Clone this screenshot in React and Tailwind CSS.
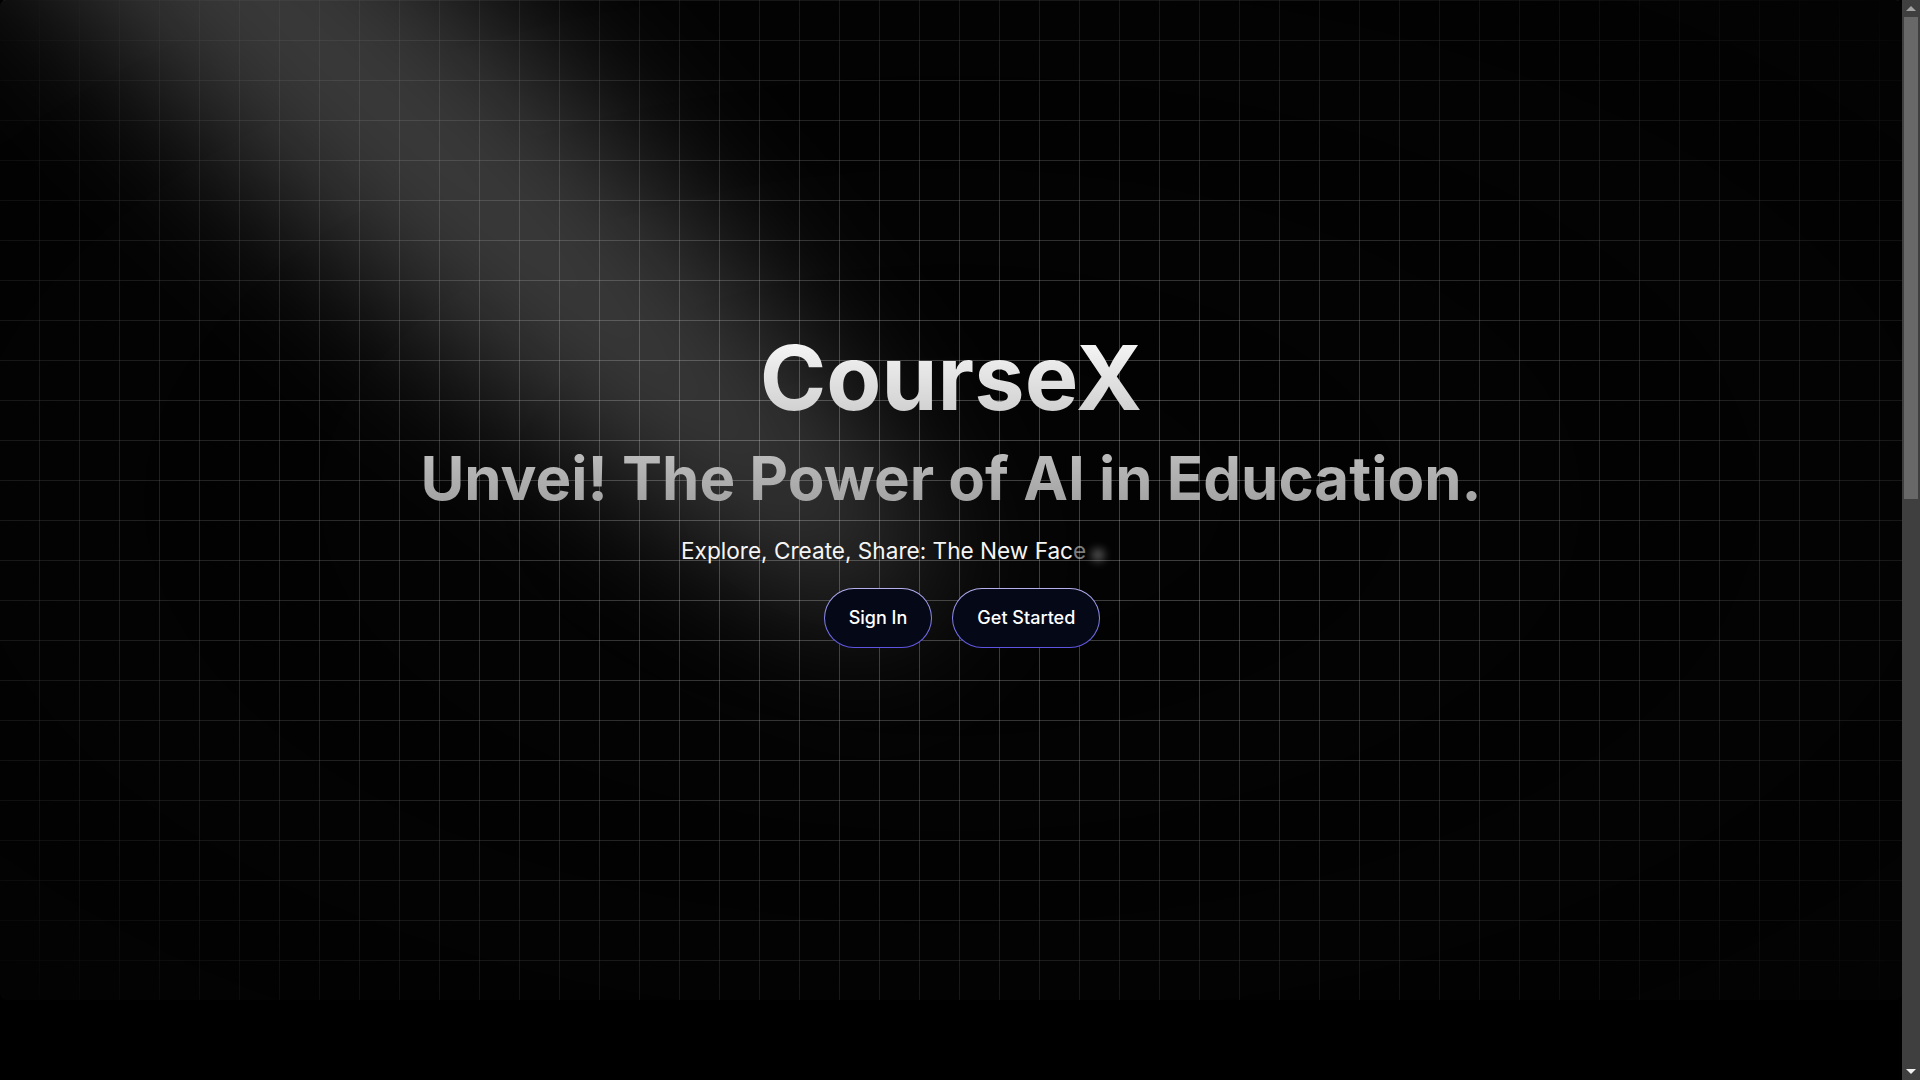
import React from 'react';

const Hero = () => {
    return (
        <section className="relative flex h-[1000px] w-full items-center justify-center overflow-hidden rounded-md bg-[#030303] pb-5">
            {/* grid */}
            <div className="pointer-events-none absolute inset-0 bg-[linear-gradient(to_left,rgba(255,255,255,0.23)_1px,transparent_1px),linear-gradient(to_bottom,rgba(255,255,255,0.23)_1px,transparent_1px)] bg-[size:40px_40px]" />
            {/* fade grid toward the edges */}
            <div className="pointer-events-none absolute inset-0 bg-[#030303] [mask-image:radial-gradient(ellipse_at_center,transparent_20%,black)]" />
            {/* spotlight */}
            <div className="pointer-events-none absolute left-[-430px] top-[-60px] h-[270px] w-[1560px] rotate-[43deg] rounded-[50%] bg-white/[0.22] blur-[70px]" />

            <div className="relative z-10 flex flex-col items-center">
                <h1 className="bg-linear-to-b from-neutral-50 to-neutral-400 bg-clip-text text-center font-bold text-transparent">
                    <span className="block text-[90px] leading-none">CourseX</span>
                    <span className="mt-[25px] block text-6xl leading-none">Unvei! The Power of AI in Education.</span>
                </h1>

                <div className="mt-[26px] w-[540px] text-left text-[22.6px] leading-[33px] text-neutral-100">
                    Explore, Create, Share: The New Fac
                    <span className="text-neutral-100/50">e</span>
                    <span className="relative inline-block w-[20px]">
                        <span className="absolute left-[6px] top-[-10px] h-[12px] w-[12px] rounded-full bg-white/40 blur-[5px]" />
                    </span>
                </div>

                <div className="ml-[22px] mt-[21px] flex gap-5">
                    <button className="rounded-full bg-linear-to-b from-[#b6b0ec] to-[#5d52e2] p-px">
                        <span className="block rounded-full bg-[#050817] px-6 py-[15px] text-lg font-medium leading-7 text-white">
                            Sign In
                        </span>
                    </button>
                    <button className="rounded-full bg-linear-to-b from-[#b6b0ec] to-[#5d52e2] p-px">
                        <span className="block rounded-full bg-[#050817] px-6 py-[15px] text-lg font-medium leading-7 text-white">
                            Get Started
                        </span>
                    </button>
                </div>
            </div>
        </section>
    );
};

const ScrollBar = () => (
    <div className="fixed right-0 top-0 z-50 flex h-screen w-[18px] flex-col items-center bg-[#3f3f3f]">
        <div className="flex h-[17px] w-full items-center justify-center">
            <span className="h-0 w-0 border-x-[5px] border-b-[5px] border-x-transparent border-b-[#a3a3a3]" />
        </div>
        <div className="h-[482px] w-[14px] bg-[#686868]" />
        <div className="flex-1" />
        <div className="flex h-[17px] w-full items-center justify-center">
            <span className="h-0 w-0 border-x-[5px] border-t-[5px] border-x-transparent border-t-[#f0f0f0]" />
        </div>
    </div>
);

export default function App() {
    return (
        <div className="min-h-screen bg-black pr-[18px] font-['Inter','Noto_Sans',sans-serif]">
            <Hero />
            <div className="h-[1340px]" />
            <ScrollBar />
        </div>
    );
}
